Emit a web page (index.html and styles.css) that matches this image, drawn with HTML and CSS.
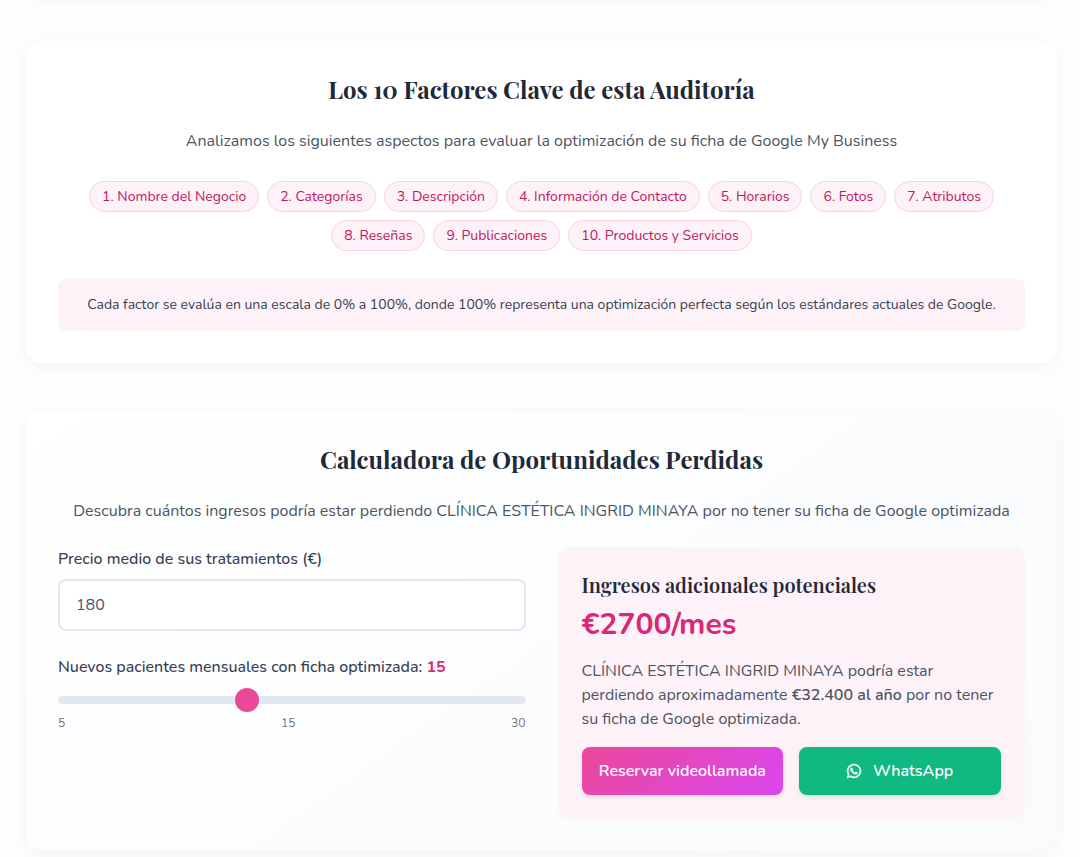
FILE: index.html
```html
<!DOCTYPE html>
<html lang="es">
<head>
    <meta charset="UTF-8">
    <meta name="viewport" content="width=device-width, initial-scale=1.0">
    <title>Auditoría</title>
    <link rel="stylesheet" href="styles.css">
</head>
<body>
    <main class="container">
        <section class="card card-top"></section>

        <section class="card">
            <h2>Los 10 Factores Clave de esta Auditoría</h2>
            <p class="intro">Analizamos los siguientes aspectos para evaluar la optimización de su ficha de Google My Business</p>
            <div class="factors">
                <span class="factor">1. Nombre del Negocio</span>
                <span class="factor">2. Categorías</span>
                <span class="factor">3. Descripción</span>
                <span class="factor">4. Información de Contacto</span>
                <span class="factor">5. Horarios</span>
                <span class="factor">6. Fotos</span>
                <span class="factor">7. Atributos</span>
                <span class="factor">8. Reseñas</span>
                <span class="factor">9. Publicaciones</span>
                <span class="factor">10. Productos y Servicios</span>
            </div>
            <p class="note">Cada factor se evalúa en una escala de 0% a 100%, donde 100% representa una optimización perfecta según los estándares actuales de Google.</p>
        </section>

        <section class="card calculator">
            <h2>Calculadora de Oportunidades Perdidas</h2>
            <p class="intro">Descubra cuántos ingresos podría estar perdiendo CLÍNICA ESTÉTICA INGRID MINAYA por no tener su ficha de Google optimizada</p>
            <div class="calc-grid">
                <div class="calc-form">
                    <label for="price">Precio medio de sus tratamientos (€)</label>
                    <input type="text" inputmode="numeric" id="price" class="price-input" value="180">

                    <label for="patients">Nuevos pacientes mensuales con ficha optimizada: <span class="patients-value">15</span></label>
                    <input type="range" id="patients" class="slider" min="5" max="30" value="15">
                    <div class="slider-scale">
                        <span>5</span>
                        <span>15</span>
                        <span>30</span>
                    </div>
                </div>

                <div class="result">
                    <h3>Ingresos adicionales potenciales</h3>
                    <p class="amount">€2700/mes</p>
                    <p class="result-text">CLÍNICA ESTÉTICA INGRID MINAYA podría estar perdiendo aproximadamente <strong>€32.400 al año</strong> por no tener su ficha de Google optimizada.</p>
                    <div class="actions">
                        <a href="#" class="btn btn-primary">Reservar videollamada</a>
                        <a href="#" class="btn btn-whatsapp">
                            <svg class="icon" viewBox="0 0 448 512" fill="currentColor" stroke="currentColor" stroke-width="14" aria-hidden="true">
                                <path d="M380.9 97.1C339 55.1 283.2 32 223.9 32c-122.4 0-222 99.6-222 222 0 39.1 10.2 77.3 29.6 111L0 480l117.7-30.9c32.4 17.7 68.9 27 106.1 27h.1c122.3 0 224.1-99.6 224.1-222 0-59.3-25.2-115-67.1-157zm-157 341.6c-33.2 0-65.7-8.9-94-25.7l-6.7-4-69.8 18.3L72 359.2l-4.4-7c-18.5-29.4-28.2-63.3-28.2-98.2 0-101.7 82.8-184.5 184.6-184.5 49.3 0 95.6 19.2 130.4 54.1 34.8 34.9 56.2 81.2 56.1 130.5 0 101.8-84.9 184.6-186.6 184.6zm101.2-138.2c-5.5-2.8-32.8-16.2-37.9-18-5.1-1.9-8.8-2.8-12.5 2.8-3.7 5.6-14.3 18-17.6 21.8-3.2 3.7-6.5 4.2-12 1.4-32.6-16.3-54-29.1-75.5-66-5.7-9.8 5.7-9.1 16.3-30.3 1.8-3.7.9-6.9-.5-9.7-1.4-2.8-12.5-30.1-17.1-41.2-4.5-10.8-9.1-9.3-12.5-9.5-3.2-.2-6.9-.2-10.6-.2-3.7 0-9.7 1.4-14.8 6.9-5.1 5.6-19.4 19-19.4 46.3 0 27.3 19.9 53.7 22.6 57.4 2.8 3.7 39.1 59.7 94.8 83.8 35.2 15.2 49 16.5 66.6 13.9 10.7-1.6 32.8-13.4 37.4-26.4 4.6-13 4.6-24.1 3.2-26.4-1.3-2.5-5-3.9-10.5-6.6z"/>
                            </svg>
                            WhatsApp
                        </a>
                    </div>
                </div>
            </div>
        </section>
    </main>
</body>
</html>
```
FILE: styles.css
```css
* {
    box-sizing: border-box;
    margin: 0;
    padding: 0;
}

body {
    font-family: Nunito, "Open Sans", sans-serif;
    font-size: 16px;
    line-height: 24px;
    color: #4b5563;
    background-color: #fefefe;
    overflow: hidden;
}

.container {
    display: flex;
    flex-direction: column;
    gap: 48px;
    padding: 0 23px 48px 26px;
}

.card {
    background-color: #fff;
    border-radius: 16px;
    padding: 32px;
    box-shadow: 0 4px 20px rgba(0, 0, 0, 0.05);
}

.card-top {
    height: 100px;
    margin-top: -107px;
}

h2,
h3 {
    font-family: "Playfair Display", "Liberation Serif", serif;
    color: #1f2937;
}

h2 {
    font-size: 24px;
    line-height: 32px;
    font-weight: 700;
    text-align: center;
    margin-bottom: 24px;
}

.intro {
    text-align: center;
    margin-bottom: 28px;
}

.factors {
    display: flex;
    flex-wrap: wrap;
    justify-content: center;
    gap: 8px;
    margin-bottom: 28px;
}

.factor {
    font-size: 14px;
    line-height: 21px;
    padding: 4px 12px;
    color: #be185d;
    background-color: #fdf2f8;
    border: 1px solid #fbcfe8;
    border-radius: 999px;
}

.note {
    font-size: 14px;
    line-height: 20px;
    padding: 16px;
    text-align: center;
    color: #374151;
    background-color: #fdf2f8;
    border-radius: 8px;
}

/* Calculator */
.calculator {
    background: linear-gradient(145deg, #ffffff, #f8fafc);
}

.calculator .intro {
    margin-bottom: 24px;
}

.calc-grid {
    display: grid;
    grid-template-columns: 1fr 1fr;
    gap: 32px;
}

.calc-form label {
    display: block;
    font-weight: 500;
    color: #374151;
    margin-bottom: 8px;
}

.price-input {
    display: block;
    width: 100%;
    font: inherit;
    color: #4b5563;
    padding: 12px 16px;
    margin-bottom: 24px;
    background-color: #fff;
    border: 2px solid #e2e8f0;
    border-radius: 8px;
}

.patients-value {
    font-weight: 700;
    color: #db2777;
}

.slider {
    -webkit-appearance: none;
    appearance: none;
    display: block;
    width: 100%;
    height: 8px;
    margin: 17px 0 11px;
    background: #e2e8f0;
    border-radius: 4px;
    outline: none;
}

.slider::-webkit-slider-thumb {
    -webkit-appearance: none;
    appearance: none;
    width: 24px;
    height: 24px;
    border-radius: 50%;
    background: #ec4899;
    cursor: pointer;
}

.slider-scale {
    display: flex;
    justify-content: space-between;
    font-size: 12px;
    line-height: 16px;
    color: #6b7280;
}

.result {
    padding: 24px;
    background-color: #fdf2f8;
    border-radius: 12px;
}

.result h3 {
    font-size: 20px;
    line-height: 28px;
    font-weight: 600;
    margin-bottom: 8px;
}

.amount {
    font-size: 30px;
    line-height: 36px;
    font-weight: 700;
    color: #db2777;
    margin-bottom: 16px;
}

.result-text {
    margin-bottom: 16px;
}

.result-text strong {
    font-weight: 600;
}

.actions {
    display: grid;
    grid-template-columns: 1fr 1fr;
    gap: 16px;
}

.btn {
    display: flex;
    align-items: center;
    justify-content: center;
    gap: 12px;
    padding: 12px 16px;
    font-weight: 600;
    color: #fff;
    text-decoration: none;
    white-space: nowrap;
    border-radius: 8px;
    box-shadow: 0 2px 4px rgba(0, 0, 0, 0.1);
}

.btn-primary {
    background: linear-gradient(135deg, #ec4899, #d946ef);
}

.btn-whatsapp {
    background-color: #10b981;
}

.icon {
    width: 14px;
    height: 16px;
    overflow: visible;
}

@media (max-width: 768px) {
    .calc-grid {
        grid-template-columns: 1fr;
    }
}
```
